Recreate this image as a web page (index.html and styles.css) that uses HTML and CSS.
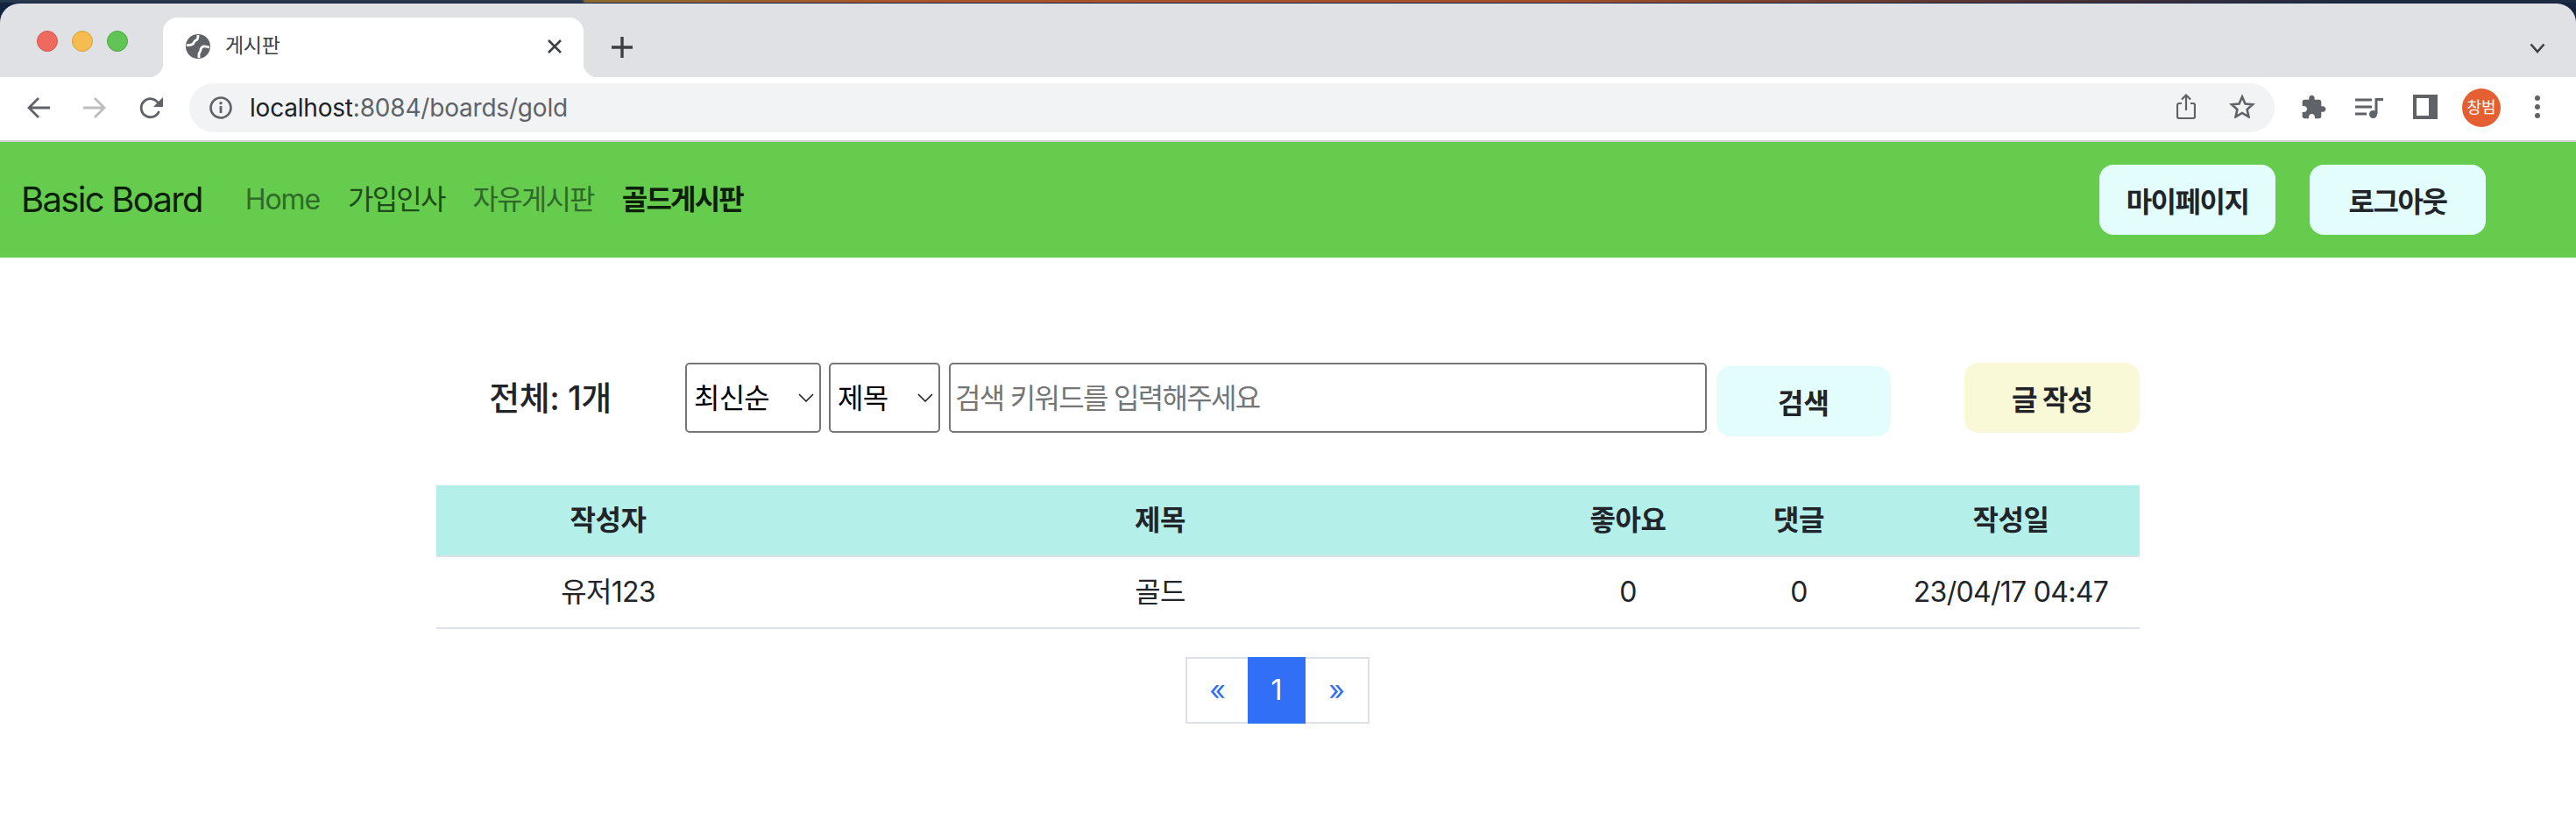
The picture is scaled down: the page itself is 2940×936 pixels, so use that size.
FILE: index.html
```html
<!DOCTYPE html>
<html lang="ko">
<head>
<meta charset="utf-8">
<title>게시판</title>
<link rel="stylesheet" href="styles.css">
</head>
<body>
<div class="browser">
  <div class="tabstrip">
    <div class="lights"><i class="light red"></i><i class="light yellow"></i><i class="light green"></i></div>
    <div class="tab">
      <svg class="favicon" viewBox="0 0 28 28"><circle cx="14" cy="14" r="14" fill="#5f6368"/><path d="M1 13c4-1 7 0 8-3s3-3 4-4 1-3 1-5M27 15c-3 0-5-2-7-1s-3 2-3 4-2 3-2 5 0 3 0 4" fill="none" stroke="#fff" stroke-width="2.800"/></svg>
      <span class="tab-title">게시판</span>
      <svg class="tab-close" viewBox="0 0 18 16"><path d="M2 1l14 14M16 1L2 15" stroke="#3c4043" stroke-width="2.6" fill="none"/></svg>
    </div>
    <svg class="newtab" viewBox="0 0 24 24"><path d="M12 0v24M0 12h24" stroke="#3c4043" stroke-width="3.4" fill="none"/></svg>
    <svg class="tabmenu" viewBox="0 0 18 12"><path d="M1.5 1.5L9 10l7.5-8.500" stroke="#3c4043" stroke-width="2.6" fill="none"/></svg>
  </div>
  <div class="toolbar">
    <svg class="nav-icon back" viewBox="0 0 26 24"><path d="M26 12H3M13 1L2 12l11 11" stroke="#5f6368" stroke-width="2.8" fill="none"/></svg>
    <svg class="nav-icon fwd" viewBox="0 0 26 24"><path d="M0 12h23M13 1l11 11-11 11" stroke="#bdbdbd" stroke-width="2.8" fill="none"/></svg>
    <svg class="nav-icon reload" viewBox="0 0 27 26"><path d="M22.500 17a10.500 10.500 0 1 1-1-9.500" stroke="#5f6368" stroke-width="2.8" fill="none"/><path d="M27 1v11H16z" fill="#5f6368"/></svg>
    <div class="omnibox">
      <svg class="info" viewBox="0 0 26 26"><circle cx="13" cy="13" r="11.500" stroke="#5f6368" stroke-width="2.6" fill="none"/><path d="M13 11v8" stroke="#5f6368" stroke-width="2.800"/><circle cx="13" cy="7.800" r="1.700" fill="#5f6368"/></svg>
      <span class="url">localhost<span class="url-rest">:8084/boards/gold</span></span>
      <svg class="share" viewBox="0 0 22 29"><path d="M6 11H3a2 2 0 0 0-2 2v13a2 2 0 0 0 2 2h16a2 2 0 0 0 2-2V13a2 2 0 0 0-2-2h-3M11 19V2M6 6.500l5-5 5 5" stroke="#5f6368" stroke-width="2.200" fill="none"/></svg>
      <svg class="star" viewBox="0 0 30 28"><path d="M15 3.500l3.500 8 8.500.800-6.400 5.700 1.900 8.400L15 21.900 7.500 26.400l1.900-8.400L3 12.300l8.500-.800z" stroke="#5f6368" stroke-width="2.600" fill="none"/></svg>
    </div>
    <svg class="ext" viewBox="1.500 .5 22 22"><path fill="#5f6368" d="M20.500 11H19V7c0-1.100-.9-2-2-2h-4V3.500C13 2.120 11.880 1 10.500 1S8 2.120 8 3.500V5H4c-1.100 0-1.990.9-1.990 2v3.800H3.500c1.490 0 2.700 1.210 2.700 2.700s-1.210 2.700-2.700 2.700H2V20c0 1.100.9 2 2 2h3.800v-1.500c0-1.490 1.210-2.700 2.700-2.700 1.490 0 2.700 1.210 2.700 2.700V22H17c1.100 0 2-.9 2-2v-4h1.500c1.380 0 2.500-1.120 2.500-2.500S21.880 11 20.500 11z"/></svg>
    <svg class="media" viewBox="0 0 32 23"><path d="M0 2h19M0 10h19M0 18h13" stroke="#5f6368" stroke-width="3" fill="none"/><path d="M24 18V1.500h8" stroke="#5f6368" stroke-width="3" fill="none"/><circle cx="20.500" cy="18.500" r="4.500" fill="#5f6368"/></svg>
    <svg class="panel" viewBox="0 0 28 28"><path fill-rule="evenodd" fill="#5f6368" d="M0 0h28v28H0zM4 4v20h14V4z"/></svg>
    <div class="avatar">창범</div>
    <svg class="dots" viewBox="0 0 6 26"><circle cx="3" cy="3" r="3" fill="#5f6368"/><circle cx="3" cy="13" r="3" fill="#5f6368"/><circle cx="3" cy="23" r="3" fill="#5f6368"/></svg>
  </div>
</div>

<nav class="navbar">
  <a class="brand">Basic Board</a>
  <ul class="menu">
    <li class="menu-item home">Home</li>
    <li class="menu-item hover">가입인사</li>
    <li class="menu-item">자유게시판</li>
    <li class="menu-item active">골드게시판</li>
  </ul>
  <div class="nav-actions">
    <button class="btn btn-mint nav-btn">마이페이지</button>
    <button class="btn btn-mint nav-btn">로그아웃</button>
  </div>
</nav>

<main class="board">
  <form class="search-row">
    <div class="total">전체: 1개</div>
    <div class="select-wrap sort">
      <select class="field"><option>최신순</option></select>
      <svg class="chev" viewBox="0 0 18 10"><path d="M1 1l8 8 8-8" stroke="#222" stroke-width="1.600" fill="none"/></svg>
    </div>
    <div class="select-wrap type">
      <select class="field"><option>제목</option></select>
      <svg class="chev" viewBox="0 0 18 10"><path d="M1 1l8 8 8-8" stroke="#222" stroke-width="1.600" fill="none"/></svg>
    </div>
    <input class="field keyword" placeholder="검색 키워드를 입력해주세요">
    <button class="btn btn-mint search-btn" type="button">검색</button>
    <button class="btn btn-cream write-btn" type="button">글 작성</button>
  </form>

  <table class="posts">
    <colgroup>
      <col class="c-author"><col class="c-title"><col class="c-like"><col class="c-reply"><col class="c-date">
    </colgroup>
    <thead>
      <tr><th>작성자</th><th>제목</th><th>좋아요</th><th>댓글</th><th>작성일</th></tr>
    </thead>
    <tbody>
      <tr><td>유저123</td><td>골드</td><td>0</td><td>0</td><td>23/04/17 04:47</td></tr>
    </tbody>
  </table>

  <ul class="pagination">
    <li class="page">«</li>
    <li class="page current">1</li>
    <li class="page">»</li>
  </ul>
</main>
</body>
</html>
```

FILE: styles.css
```css
* { box-sizing: border-box; }
html, body { margin: 0; padding: 0; }
body {
  width: 2940px;
  height: 936px;
  overflow: hidden;
  background: #fff;
  color: #212529;
  font-family: Inter, "Noto Sans CJK KR", "Noto Sans", sans-serif;
  font-size: 32px;
  line-height: 48px;
}

/* browser chrome */
.browser {
  padding-top: 4px;
  background:
    linear-gradient(90deg, #26384e 0, #26384e 664px, #8a6a30 668px, #a8562a 1000px, #a04f2a 1800px, #4a3035 2350px, #1c2a42 2700px) 0 0 / 100% 3px no-repeat,
    #14233f;
}
.tabstrip {
  position: relative;
  display: flex;
  align-items: flex-start;
  height: 84px;
  background: #dfe1e5;
  border-radius: 22px 22px 0 0;
}
.lights { display: flex; gap: 16px; width: 186px; padding: 31px 0 0 42px; }
.light { display: block; width: 24px; height: 24px; border-radius: 50%; border: 1px solid; }
.red { background: #ee6a5f; border-color: #d8534a; }
.yellow { background: #f5bd4f; border-color: #dea034; }
.green { background: #61c454; border-color: #4aa73e; }
.tab {
  position: relative;
  display: flex;
  align-items: center;
  width: 480px;
  height: 68px;
  margin-top: 16px;
  padding: 0 24px 0 26px;
  background: #fff;
  border-radius: 16px 16px 0 0;
}
.tab::before, .tab::after {
  content: "";
  position: absolute;
  bottom: 0;
  width: 16px;
  height: 16px;
}
.tab::before { left: -16px; background: radial-gradient(circle at 0 0, transparent 16px, #fff 16.500px); }
.tab::after { right: -16px; background: radial-gradient(circle at 100% 0, transparent 16px, #fff 16.500px); }
.favicon { width: 28px; height: 28px; margin-top: -2px; flex: none; }
.tab-title { margin-left: 17px; font-size: 23px; color: #3c4043; flex: 1; margin-top: -4px; letter-spacing: -0.3px; }
.tab-close { width: 18px; height: 16px; margin-top: -2px; flex: none; }
.newtab { width: 24px; height: 24px; margin: 38px 0 0 32px; flex: none; }
.tabmenu { position: absolute; left: 2887px; top: 45px; width: 18px; height: 12px; }

.toolbar {
  display: flex;
  align-items: center;
  height: 74px;
  padding: 8px 0 10px 31px;
  background: #fff;
  border-bottom: 2px solid #d3d3d3;
}
.nav-icon { width: 26px; height: 24px; flex: none; }
.fwd { margin-left: 38px; }
.reload { margin-left: 38px; width: 27px; height: 26px; }
.omnibox {
  display: flex;
  align-items: center;
  width: 2380px;
  height: 56px;
  margin-left: 30px;
  padding: 0 22px 0 23px;
  background: #f1f3f4;
  border-radius: 28px;
  flex: none;
}
.info { width: 26px; height: 26px; flex: none; }
.url { margin-left: 20px; font-size: 28px; color: #202124; flex: 1; white-space: nowrap; letter-spacing: -0.2px; }
.url-rest { color: #5f6368; }
.share { width: 22px; height: 29px; flex: none; margin-top: -4px; }
.star { width: 30px; height: 28px; margin-left: 38px; flex: none; margin-top: -4px; }
.ext { width: 30px; height: 28px; margin-left: 30px; flex: none; margin-top: -2px; }
.media { width: 32px; height: 23px; margin-left: 32px; flex: none; }
.panel { width: 28px; height: 28px; margin-left: 34px; flex: none; margin-top: -2px; }
.avatar {
  display: flex;
  align-items: center;
  justify-content: center;
  width: 44px;
  height: 44px;
  margin-left: 28px;
  border-radius: 50%;
  background: #e46032;
  color: #fff;
  font-size: 18px;
  flex: none;
}
.dots { width: 6px; height: 26px; margin-left: 39px; flex: none; margin-top: -2px; }

/* page navbar */
.navbar {
  display: flex;
  align-items: center;
  height: 132px;
  padding: 0 103px 0 24px;
  background: #66cc4d;
}
.brand { font-size: 40px; color: #0c1f08; letter-spacing: -1.7px; }
.menu { display: flex; gap: 32px; margin: 0 0 0 49px; padding: 0; list-style: none; }
.menu-item { color: #2f6a2a; letter-spacing: -1.8px; }
.menu-item.home { letter-spacing: -1.1px; }
.menu-item.hover { color: #1f4b1c; }
.menu-item.active { color: #0c1f08; font-weight: 700; }
.nav-actions { display: flex; gap: 39px; margin-left: auto; }

.btn {
  border: 0;
  font-family: inherit;
  font-size: 32px;
  font-weight: 700;
  color: #212529;
  border-radius: 16px;
  padding: 0;
}
.btn-mint { background: #e3fdfd; }
.btn-cream { background: #f9f9d7; }
.nav-btn { width: 201px; height: 80px; letter-spacing: -1.5px; }

/* board */
.board { width: 1944px; margin: 0 auto; padding-top: 120px; }
.search-row { display: flex; align-items: flex-start; height: 84px; margin-bottom: 56px; }
.total { width: 260px; margin-right: 24px; line-height: 80px; text-align: center; font-size: 38px; font-weight: 500; letter-spacing: -0.5px; }
.select-wrap { position: relative; flex: none; }
.sort { width: 155px; margin-right: 9px; }
.type { width: 127px; margin-right: 10px; }
.field {
  display: block;
  height: 80px;
  width: 100%;
  border: 2px solid #767676;
  border-radius: 5px;
  background: #fff;
  color: #000;
  font-family: inherit;
  font-size: 32px;
  letter-spacing: -0.8px;
  padding: 0 0 0 8px;
  appearance: none;
}
.chev { position: absolute; right: 8px; top: 35px; width: 18px; height: 10px; pointer-events: none; }
.keyword { width: 865px; flex: none; padding-left: 5px; letter-spacing: -1.7px; }
.keyword::placeholder { color: #757575; }
.search-btn { width: 199px; height: 80px; margin: 4px 0 0 11px; flex: none; }
.write-btn { width: 200px; height: 80px; margin-left: 84px; flex: none; letter-spacing: -1px; }

.posts { width: 100%; table-layout: fixed; border-collapse: separate; border-spacing: 0; }
.c-author { width: 392px; }
.c-title { width: 868px; }
.c-like { width: 200px; }
.c-reply { width: 190px; }
.c-date { width: 294px; }
.posts th, .posts td { padding: 0; text-align: center; }
.posts th { height: 82px; background: #b5efe9; font-weight: 700; letter-spacing: -0.5px; border-bottom: 2px solid #dee2e6; }
.posts td { height: 82px; letter-spacing: -0.7px; border-bottom: 2px solid #dee2e6; }

.pagination { display: flex; margin: 32px 0 0 855px; padding: 0; list-style: none; }
.page {
  display: flex;
  align-items: center;
  justify-content: center;
  width: 73px;
  height: 76px;
  border: 2px solid #dee2e6;
  color: #316ff6;
}
.page.current { width: 66px; margin: 0 -2px; background: #316ff6; border-color: #316ff6; color: #fff; position: relative; }
.page:last-child { width: 75px; }
```
